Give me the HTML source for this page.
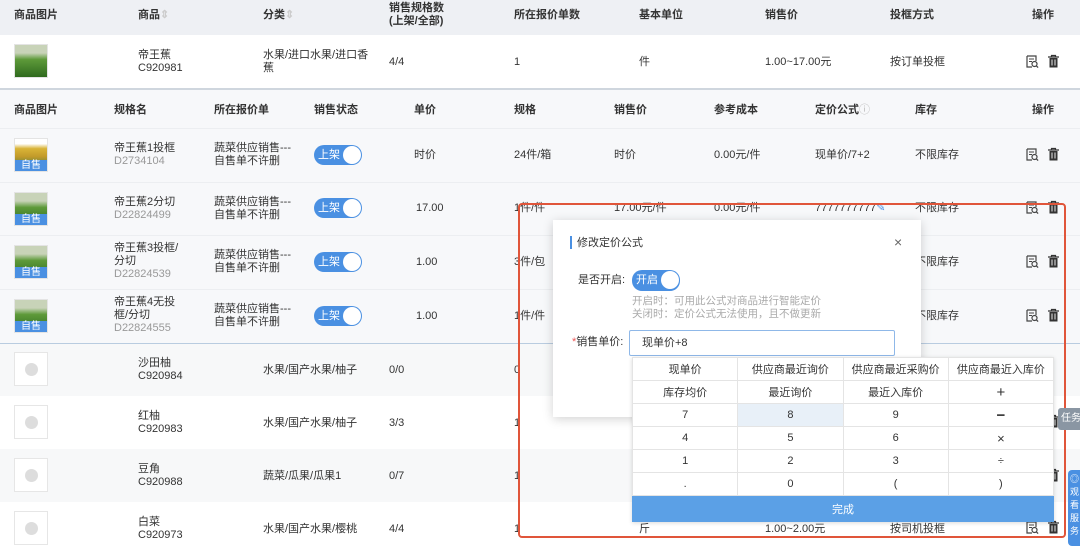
<!DOCTYPE html>
<html><head><meta charset="utf-8">
<style>
*{margin:0;padding:0;box-sizing:border-box}
body{width:1080px;height:552px;overflow:hidden;position:relative;background:#fff;font-family:"Liberation Sans","Noto Sans CJK SC",sans-serif;font-size:11px;color:#333}
.a{position:absolute;white-space:nowrap;line-height:13px}
.bg{position:absolute;left:0;width:1080px}
.h{font-weight:bold;color:#333}
.g{color:#999}
.img{position:absolute;left:14px;width:34px;height:34px;border:1px solid #e4e4e4;background:linear-gradient(#c8d3b8 0,#c8d3b8 25%,#5e9a3a 45%,#2f6a1e 100%)}
.ph{position:absolute;left:14px;width:34px;height:34px;border:1px solid #e6e6e6;background:#fff}
.ph:after{content:"";position:absolute;left:10px;top:10px;width:13px;height:13px;border-radius:50%;background:#ddd}
.lab{position:absolute;left:0;bottom:0;width:100%;height:11px;background:#4a90e2;color:#fff;font-size:10px;line-height:11px;text-align:center}
.tg{position:absolute;left:314px;width:48px;height:20px;border-radius:10px;background:#4a90e2;color:#fff;font-size:11px;line-height:20px;padding-left:4px}
.tg:after{content:"";position:absolute;right:1px;top:1px;width:18px;height:18px;border-radius:50%;background:#fff}
.ic{position:absolute}
.kp{position:absolute;left:632px;top:357px;width:422px;border-collapse:collapse;background:#fff;box-shadow:0 1px 4px rgba(0,0,0,.15)}
.kp td{border:1px solid #e4e4e4;height:23px;text-align:center;font-size:11px;padding:0;width:25%}
</style></head><body>
<div class="bg" style="top:0;height:35px;background:#eef0f4"></div>
<div class="bg" style="top:88px;height:2px;background:#cfd6de"></div>
<div class="bg" style="top:90px;height:253px;background:#f7f8fa"></div>
<div class="bg" style="top:128px;height:1px;background:#eceef1"></div>
<div class="bg" style="top:182px;height:1px;background:#eceef1"></div>
<div class="bg" style="top:235px;height:1px;background:#eceef1"></div>
<div class="bg" style="top:289px;height:1px;background:#eceef1"></div>
<div class="bg" style="top:343px;height:1px;background:#b9cce0"></div>
<div class="bg" style="top:344px;height:52px;background:#f7f8f9"></div>
<div class="bg" style="top:449px;height:53px;background:#f7f8f9"></div>

<div class="a h" style="left:14px;top:9px">商品图片</div>
<div class="a h" style="left:138px;top:9px">商品<span style="color:#ccc">⇕</span></div>
<div class="a h" style="left:263px;top:9px">分类<span style="color:#ccc">⇕</span></div>
<div class="a h" style="left:389px;top:2px">销售规格数<br>(上架/全部)</div>
<div class="a h" style="left:514px;top:9px">所在报价单数</div>
<div class="a h" style="left:639px;top:9px">基本单位</div>
<div class="a h" style="left:765px;top:9px">销售价</div>
<div class="a h" style="left:890px;top:9px">投框方式</div>
<div class="a h" style="left:1032px;top:9px">操作</div>

<div class="img" style="top:44px"></div>
<div class="a" style="left:138px;top:49px">帝王蕉<br>C920981</div>
<div class="a" style="left:263px;top:49px">水果/进口水果/进口香<br>蕉</div>
<div class="a" style="left:389px;top:56px">4/4</div>
<div class="a" style="left:514px;top:56px">1</div>
<div class="a" style="left:639px;top:56px">件</div>
<div class="a" style="left:765px;top:56px">1.00~17.00元</div>
<div class="a" style="left:890px;top:56px">按订单投框</div>

<div class="a h" style="left:14px;top:104px">商品图片</div>
<div class="a h" style="left:114px;top:104px">规格名</div>
<div class="a h" style="left:214px;top:104px">所在报价单</div>
<div class="a h" style="left:314px;top:104px">销售状态</div>
<div class="a h" style="left:414px;top:104px">单价</div>
<div class="a h" style="left:514px;top:104px">规格</div>
<div class="a h" style="left:614px;top:104px">销售价</div>
<div class="a h" style="left:714px;top:104px">参考成本</div>
<div class="a h" style="left:815px;top:104px">定价公式<span style="color:#bbb;font-weight:normal">ⓘ</span></div>
<div class="a h" style="left:915px;top:104px">库存</div>
<div class="a h" style="left:1032px;top:104px">操作</div>

<div class="img" style="top:138px;background:linear-gradient(#fff 0,#fff 15%,#d9b437 30%,#c29a2a 55%,#7a8a3a 75%)"><div class="lab">自售</div></div>
<div class="a" style="left:114px;top:142px">帝王蕉1投框<br><span class="g">D2734104</span></div>
<div class="a" style="left:214px;top:142px">蔬菜供应销售---<br>自售单不许删</div>
<div class="tg" style="top:145px">上架</div>
<div class="a" style="left:414px;top:149px">时价</div>
<div class="a" style="left:514px;top:149px">24件/箱</div>
<div class="a" style="left:614px;top:149px">时价</div>
<div class="a" style="left:714px;top:149px">0.00元/件</div>
<div class="a" style="left:815px;top:149px">现单价/7+2</div>
<div class="a" style="left:915px;top:149px">不限库存</div>

<div class="img" style="top:192px"><div class="lab">自售</div></div>
<div class="a" style="left:114px;top:196px">帝王蕉2分切<br><span class="g">D22824499</span></div>
<div class="a" style="left:214px;top:196px">蔬菜供应销售---<br>自售单不许删</div>
<div class="tg" style="top:198px">上架</div>
<div class="a" style="left:416px;top:202px">17.00</div>
<div class="a" style="left:514px;top:202px">1件/件</div>
<div class="a" style="left:614px;top:202px">17.00元/件</div>
<div class="a" style="left:714px;top:202px">0.00元/件</div>
<div class="a" style="left:815px;top:202px">7777777777<span style="color:#4a90e2">✎</span></div>
<div class="a" style="left:915px;top:202px">不限库存</div>

<div class="img" style="top:245px"><div class="lab">自售</div></div>
<div class="a" style="left:114px;top:242px">帝王蕉3投框/<br>分切<br><span class="g">D22824539</span></div>
<div class="a" style="left:214px;top:249px">蔬菜供应销售---<br>自售单不许删</div>
<div class="tg" style="top:252px">上架</div>
<div class="a" style="left:416px;top:256px">1.00</div>
<div class="a" style="left:514px;top:256px">3件/包</div>
<div class="a" style="left:915px;top:256px">不限库存</div>

<div class="img" style="top:299px"><div class="lab">自售</div></div>
<div class="a" style="left:114px;top:296px">帝王蕉4无投<br>框/分切<br><span class="g">D22824555</span></div>
<div class="a" style="left:214px;top:303px">蔬菜供应销售---<br>自售单不许删</div>
<div class="tg" style="top:306px">上架</div>
<div class="a" style="left:416px;top:310px">1.00</div>
<div class="a" style="left:514px;top:310px">1件/件</div>
<div class="a" style="left:915px;top:310px">不限库存</div>

<div class="ph" style="top:352px"></div>
<div class="a" style="left:138px;top:357px">沙田柚<br>C920984</div>
<div class="a" style="left:263px;top:364px">水果/国产水果/柚子</div>
<div class="a" style="left:389px;top:364px">0/0</div>
<div class="a" style="left:514px;top:364px">0</div>

<div class="ph" style="top:405px"></div>
<div class="a" style="left:138px;top:410px">红柚<br>C920983</div>
<div class="a" style="left:263px;top:417px">水果/国产水果/柚子</div>
<div class="a" style="left:389px;top:417px">3/3</div>
<div class="a" style="left:514px;top:417px">1</div>

<div class="ph" style="top:458px"></div>
<div class="a" style="left:138px;top:463px">豆角<br>C920988</div>
<div class="a" style="left:263px;top:470px">蔬菜/瓜果/瓜果1</div>
<div class="a" style="left:389px;top:470px">0/7</div>
<div class="a" style="left:514px;top:470px">1</div>

<div class="ph" style="top:511px"></div>
<div class="a" style="left:138px;top:516px">白菜<br>C920973</div>
<div class="a" style="left:263px;top:523px">水果/国产水果/樱桃</div>
<div class="a" style="left:389px;top:523px">4/4</div>
<div class="a" style="left:514px;top:523px">1</div>
<div class="a" style="left:639px;top:523px">斤</div>
<div class="a" style="left:765px;top:523px">1.00~2.00元</div>
<div class="a" style="left:890px;top:523px">按司机投框</div>

<svg class="ic" style="left:1020px;top:0" width="50" height="552">
<defs>
<g id="e"><path d="M1 1h9v5M1 1v11h5" fill="none" stroke="#444" stroke-width="1.2"/><path d="M3 4h5M3 6.5h3" stroke="#444"/><circle cx="8.5" cy="9" r="2.5" fill="none" stroke="#444" stroke-width="1.2"/><path d="M10.3 10.8l1.8 1.8" stroke="#444" stroke-width="1.3"/></g>
<g id="t"><path d="M0 2h11M3.5 2v-1.5h4v1.5" fill="none" stroke="#333" stroke-width="1.2"/><path d="M1.5 3h8v9.5h-8z" fill="#333"/><path d="M4 4.5v6M7 4.5v6" stroke="#fff" stroke-width="0.9"/></g>
</defs>
<use href="#e" x="6" y="55"/><use href="#t" x="28" y="55"/>
<use href="#e" x="6" y="148"/><use href="#t" x="28" y="148"/>
<use href="#e" x="6" y="201"/><use href="#t" x="28" y="201"/>
<use href="#e" x="6" y="255"/><use href="#t" x="28" y="255"/>
<use href="#e" x="6" y="309"/><use href="#t" x="28" y="309"/>
<use href="#t" x="28" y="415"/>
<use href="#t" x="28" y="469"/>
<use href="#e" x="6" y="521"/><use href="#t" x="28" y="521"/>
</svg>

<div style="position:absolute;left:553px;top:220px;width:368px;height:197px;background:#fff;box-shadow:0 2px 10px rgba(0,0,0,.18)"></div>
<div style="position:absolute;left:570px;top:236px;width:2px;height:13px;background:#4a90e2"></div>
<div class="a" style="left:577px;top:237px">修改定价公式</div>
<div class="a" style="left:894px;top:236px;font-size:14px;color:#666">×</div>
<div class="a" style="left:578px;top:274px">是否开启:</div>
<div class="tg" style="left:632px;top:270px;height:21px">开启</div>
<div class="a" style="left:632px;top:295px;color:#aaa;font-size:10.5px">开启时：可用此公式对商品进行智能定价<br>关闭时：定价公式无法使用，且不做更新</div>
<div class="a" style="left:572px;top:336px"><span style="color:#e55">*</span>销售单价:</div>
<div style="position:absolute;left:629px;top:330px;width:266px;height:26px;border:1px solid #8fb8e8;border-radius:2px;padding-left:12px;line-height:24px">现单价+8</div>
<table class="kp">
<tr><td>现单价</td><td>供应商最近询价</td><td>供应商最近采购价</td><td>供应商最近入库价</td></tr>
<tr><td>库存均价</td><td>最近询价</td><td>最近入库价</td><td style="font-size:15px">+</td></tr>
<tr><td>7</td><td style="background:#e8f0f8">8</td><td>9</td><td style="font-size:15px;font-weight:bold">−</td></tr>
<tr><td>4</td><td>5</td><td>6</td><td style="font-size:13px">×</td></tr>
<tr><td>1</td><td>2</td><td>3</td><td>÷</td></tr>
<tr><td>.</td><td>0</td><td>(</td><td>)</td></tr>
<tr><td colspan="4" style="background:#5ba0e6;color:#fff;height:26px;border-color:#5ba0e6">完成</td></tr>
</table>

<div style="position:absolute;left:518px;top:203px;width:548px;height:335px;border:2.5px solid #e0553a;border-radius:4px"></div>

<div style="position:absolute;left:1058px;top:408px;width:22px;height:22px;background:#8a96a3;border-radius:3px 0 0 3px;color:#fff;font-size:10px;line-height:22px;padding-left:3px;white-space:nowrap;overflow:hidden">任务</div>
<div style="position:absolute;left:1068px;top:470px;width:14px;height:76px;background:#4a90e2;border-radius:4px 0 0 4px;color:#fff;font-size:9px;line-height:13px;padding:3px 0 0 2px;overflow:hidden">◎<br>观<br>看<br>服<br>务</div>
</body></html>
